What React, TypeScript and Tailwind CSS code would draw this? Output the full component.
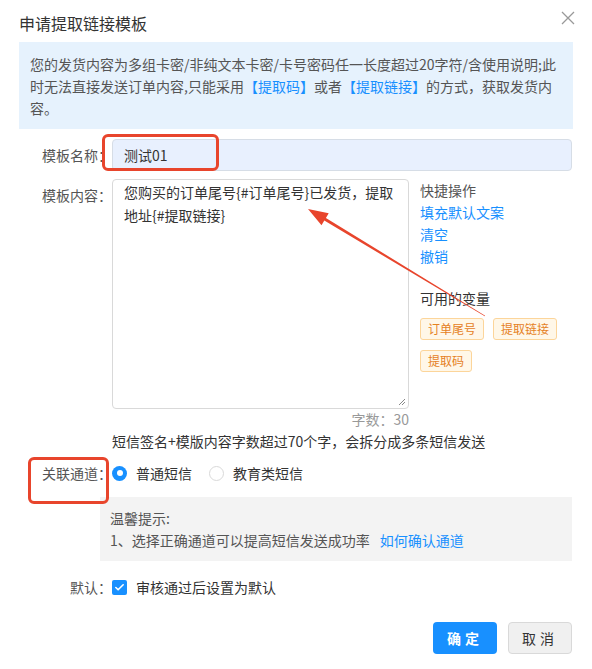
import { Check } from 'lucide-react'

// 申请提取链接模板 弹窗，静态还原。红框和红箭头是截图上的标注，叠在内容上面。

const font = { fontFamily: '"Noto Sans CJK SC", "Noto Sans", sans-serif' }

const quickActions = ['填充默认文案', '清空', '撤销']

function Tag({ children }: { children: React.ReactNode }) {
  return (
    <span className="inline-flex h-[22px] items-center rounded-[3px] border border-[#fcd59a] bg-[#fff7e8] px-[7px] text-[12px] text-[#e5811f]">
      {children}
    </span>
  )
}

function Label({ children }: { children: React.ReactNode }) {
  return <div className="w-[112px] shrink-0 text-right text-[14px] leading-[22px] text-[#555]">{children}</div>
}

export default function App() {
  return (
    <div className="relative h-[669px] w-[592px] overflow-hidden bg-white text-[#333]" style={font}>
      {/* 标题 + 关闭 */}
      <div className="px-[19px] pt-[11px]">
        <h2 className="text-[16px] leading-[24px] text-[#333]">申请提取链接模板</h2>
      </div>
      <button className="absolute right-[17px] top-[11px] text-[#999]">
        <svg width="14" height="14" viewBox="0 0 14 14" stroke="currentColor" strokeWidth="1.3" fill="none">
          <path d="M1 1 13 13M13 1 1 13" />
        </svg>
      </button>

      <div className="mx-[19px] mt-[7px] whitespace-nowrap bg-[#e6f2fd] px-[11px] pb-[10px] pt-[11px] text-[14px] leading-[22px] text-[#555]">
        <div>您的发货内容为多组卡密/非纯文本卡密/卡号密码任一长度超过20字符/含使用说明;此</div>
        <div>
          时无法直接发送订单内容,只能采用<span className="text-[#1890ff]">【提取码】</span>或者
          <span className="text-[#1890ff]">【提取链接】</span>的方式，获取发货内
        </div>
        <div>容。</div>
      </div>

      <div className="pr-[20px]">
        {/* 模板名称 */}
        <div className="mt-[10px] flex items-center">
          <Label>模板名称：</Label>
          <div className="flex h-[32px] flex-1 items-center rounded-[4px] border border-[#d6dde6] bg-[#e8f0fe] px-[11px] text-[14px]">
            测试01
          </div>
        </div>

        {/* 模板内容 */}
        <div className="mt-[8px] flex">
          <div className="pt-[5px]">
            <Label>模板内容：</Label>
          </div>
          <div className="w-[297px] shrink-0">
            <div className="relative h-[230px] rounded-[4px] border border-[#d9d9d9] px-[11px] pt-[1px] text-[14px] leading-[23px] text-[#333]">
              <div>您购买的订单尾号{'{'}#订单尾号{'}'}已发货，提取</div>
              <div>地址{'{'}#提取链接{'}'}</div>
              <svg className="absolute bottom-[2px] right-[2px]" width="8" height="8" viewBox="0 0 8 8" stroke="#888" strokeWidth="1">
                <path d="M1 7 7 1M4 7 7 4" />
              </svg>
            </div>
            <div className="text-right text-[14px] leading-[20px] text-[#999]">字数：30</div>
          </div>
          <div className="ml-[11px] text-[14px] leading-[22px]">
            <div className="text-[#555]">快捷操作</div>
            {quickActions.map((a) => (
              <div key={a} className="text-[#1890ff]">{a}</div>
            ))}
            <div className="mt-[20px] text-[#333]">可用的变量</div>
            <div className="mt-[9px] flex w-[150px] flex-wrap gap-x-[9px] gap-y-[10px]">
              <Tag>订单尾号</Tag>
              <Tag>提取链接</Tag>
              <Tag>提取码</Tag>
            </div>
          </div>
        </div>

        <div className="ml-[112px] mt-[1px] text-[14px] leading-[22px] text-[#333]">
          短信签名+模版内容字数超过70个字，会拆分成多条短信发送
        </div>

        {/* 关联通道 */}
        <div className="mt-[10px] flex items-center">
          <Label>关联通道：</Label>
          <div className="flex items-center text-[14px] leading-[22px] text-[#333]">
            <span className="flex h-[15px] w-[15px] items-center justify-center rounded-full bg-[#1890ff]">
              <span className="h-[6px] w-[6px] rounded-full bg-white" />
            </span>
            <span className="ml-[9px]">普通短信</span>
            <span className="ml-[17px] h-[15px] w-[15px] rounded-full border border-[#d9d9d9] bg-white" />
            <span className="ml-[9px]">教育类短信</span>
          </div>
        </div>

        <div className="ml-[100px] mt-[13px] bg-[#f3f3f3] px-[10px] pb-[10px] pt-[10px] text-[14px] leading-[22px] text-[#555]">
          <div>温馨提示:</div>
          <div>
            1、选择正确通道可以提高短信发送成功率<span className="ml-[10px] text-[#1890ff]">如何确认通道</span>
          </div>
        </div>

        {/* 默认 */}
        <div className="mt-[15px] flex items-center">
          <Label>默认：</Label>
          <span className="flex h-[15px] w-[15px] items-center justify-center rounded-[2px] bg-[#1890ff]">
            <Check size={11} strokeWidth={3.5} color="white" />
          </span>
          <span className="ml-[9px] text-[14px] leading-[22px] text-[#333]">审核通过后设置为默认</span>
        </div>

        <div className="mt-[24px] flex justify-end gap-[11px]">
          <button className="h-[32px] w-[64px] rounded-[4px] bg-[#1890ff] text-[14px] font-bold tracking-[4px] text-white">
            确定
          </button>
          <button className="h-[32px] w-[64px] rounded-[4px] border border-[#d9d9d9] bg-[#f0f0f0] text-[14px] tracking-[4px] text-[#333]">
            取消
          </button>
        </div>
      </div>

      {/* 截图标注：红框与箭头 */}
      <div className="pointer-events-none absolute left-[102px] top-[134px] h-[37px] w-[117px] rounded-[6px] border-[3px] border-[#e8452c]" />
      <div className="pointer-events-none absolute left-[28px] top-[457px] h-[47px] w-[81px] rounded-[6px] border-[3px] border-[#e8452c]" />
      <svg className="pointer-events-none absolute left-0 top-0" width="592" height="669">
        <polygon fill="#e8452c" points="485.2,315.7 484.8,316.3 324.3,220.6 321.5,225.3 308,209 328.7,213.3 325.9,218" />
      </svg>
    </div>
  )
}
